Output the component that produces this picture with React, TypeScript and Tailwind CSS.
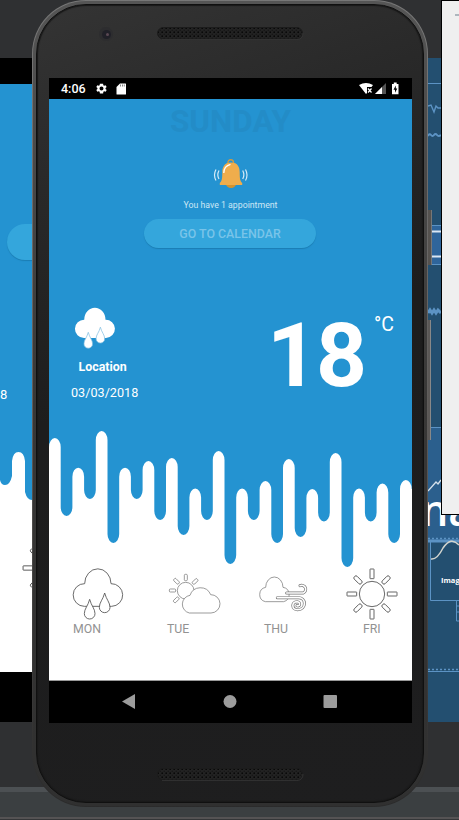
import React from "react";

const PEAKS = [438, 467.7, 431, 467.7, 461, 458, 488.5, 451, 488.5, 481, 459, 489, 453, 488.5, 483.5, 480];
const DRIPS = [516, 499, 543, 499, 520, 535, 520, 564, 520, 543, 537, 521.5, 567, 521.5, 543];
const STEP = 11.7;
const CAP = 9;

function wavePath(top: number) {
  let d = `M0 145 V${PEAKS[0] - top + CAP}`;
  PEAKS.forEach((p, i) => {
    const x = (2 * i + 1) * STEP;
    d += ` A${STEP / 2} ${CAP} 0 0 1 ${x} ${p - top + CAP}`;
    if (i < DRIPS.length) {
      const b = DRIPS[i] - top - CAP;
      d += ` V${b} A${STEP / 2} ${CAP} 0 0 0 ${x + STEP} ${b} V${PEAKS[i + 1] - top + CAP}`;
    }
  });
  return d + " H364 V145 Z";
}

const drop = (x: number, y: number) =>
  `M${x} ${y} C${x - 5} ${y + 20} ${x - 16} ${y + 28} ${x - 16} ${y + 43} A16 16 0 0 0 ${x + 16} ${y + 43} C${x + 16} ${y + 28} ${x + 5} ${y + 20} ${x} ${y}Z`;

function RainCloud({ className, fill, stroke, dropStroke }: { className: string; fill: string; stroke: string; dropStroke: string }) {
  return (
    <svg className={className} viewBox="51 24 156 156" strokeWidth="2.6">
      <path d="M88 139 A34 34 0 0 1 89 71 A39.5 44.5 0 0 1 168 71 A34 34 0 0 1 170 139Z" fill={fill} stroke={stroke} />
      <path d={drop(104, 118)} fill={fill} stroke={dropStroke} />
      <path d={drop(149, 99)} fill={fill} stroke={dropStroke} />
    </svg>
  );
}

function PartlyCloudy() {
  return (
    <svg className="h-[41px] w-[53px] shrink-0" viewBox="339 40 159 123" fill="white" stroke="#777" strokeWidth="2.2">
      <circle cx="392" cy="93" r="25" />
      {[-135, -90, -45, 0, 45].map((a) => (
        <rect key={a} x="388" y="44" width="9" height="19" rx="3" transform={`rotate(${a} 392 93)`} />
      ))}
      <path d="M403 160 A27 27 0 0 1 405 107 A33 33 0 0 1 467 105 A27.5 27.5 0 0 1 468 160Z" />
    </svg>
  );
}

function WindyCloud() {
  const gust = "M159 99 H209 A11.5 11.5 0 1 0 199 77";
  const curl = "M131 113 H192 C219 111 219 149 192 149 C173 149 173 125 190 125 C202 126 199 141 190 137";
  return (
    <svg className="-ml-px h-[36px] w-[53px] shrink-0" viewBox="70 48 159 108" fill="none" stroke="#777" strokeWidth="2.2">
      <path d="M95 125 A22 22 0 0 1 96 82 A26 31 0 0 1 148 82 A22 22 0 0 1 150 125Z" fill="white" />
      {[gust, curl].map((d) => (
        <g key={d} strokeLinecap="round">
          <path d={d} strokeWidth="9" />
          <path d={d} stroke="white" strokeWidth="4.8" />
        </g>
      ))}
    </svg>
  );
}

function Sun({ className }: { className: string }) {
  return (
    <svg className={className} viewBox="333 23 156 156" fill="white" stroke="#505050" strokeWidth="2.6">
      <circle cx="411" cy="101" r="38" />
      {[0, 45, 90, 135, 180, 225, 270, 315].map((a) => (
        <rect key={a} x="405" y={a % 90 ? 27 : 26} width="12" height="29" rx={a % 90 ? 5 : 1} transform={`rotate(${a} 411 101)`} />
      ))}
    </svg>
  );
}

function Bell() {
  return (
    <svg className="mt-[4px] h-[31px] w-[36px]" viewBox="0 0 36 31" fill="none">
      <circle cx="17.700" cy="4.500" r="2.800" stroke="#cf9a43" strokeWidth="1.400" />
      <path d="M13 26 h10 a5 4 0 0 1 -10 0Z" fill="#d4922f" />
      <path d="M18 4.5 C11 4.5 9.3 9.5 9.3 14.5 C9.3 21 8.8 23 6.8 25 V27 H29.2 V25 C27.2 23 26.7 21 26.7 14.5 C26.7 9.5 25 4.5 18 4.5Z" fill="#efad4c" />
      <path d="M10.8 15 C10.8 10 13 7.5 17.5 6.3" stroke="white" strokeWidth="1.3" />
      <path d="M3 11.5 Q0 17 3 22.5 M6 12.5 Q3.6 17 6 21 M32.5 11.5 Q35.500 17 32.500 22.5 M29.700 12.5 Q32 17 29.700 21" stroke="#d5ebf7" strokeWidth="1.2" />
    </svg>
  );
}

function Speaker({ id }: { id: string }) {
  return (
    <svg className="h-[13px] w-[147px]" viewBox="0 0 147 13">
      <defs>
        <pattern id={id} width="4" height="4" patternUnits="userSpaceOnUse">
          <rect width="4" height="4" fill="#222" />
          <circle cx="1.2" cy="1.2" r=".9" fill="#080808" />
          <circle cx="3.2" cy="3.2" r=".7" fill="#121212" />
        </pattern>
      </defs>
      <rect x=".5" y=".5" width="145" height="11.500" rx="5.800" fill={`url(#${id})`} stroke="#1c1c1c" />
      <path d="M5 12.6 H140 Q146 12 146 6" stroke="#393939" strokeWidth=".8" fill="none" />
    </svg>
  );
}

function StatusBar() {
  return (
    <div className="flex h-[21px] shrink-0 items-center bg-black pl-[12px] pr-[12px] text-white">
      <span className="w-[34px] text-[12.5px] font-medium leading-[21px]">4:06</span>
      <svg className="h-[13px] w-[13px]" viewBox="0 0 24 24" fill="white">
        <path fillRule="evenodd" d="M19.4 13a7.500 7.500 0 0 0 0-2l2.100-1.600-2-3.500-2.500 1a8 8 0 0 0-1.700-1L15 3H9l-.4 2.900a8 8 0 0 0-1.700 1l-2.500-1-2 3.500L4.500 11a7.500 7.500 0 0 0 0 2l-2.100 1.600 2 3.500 2.500-1a8 8 0 0 0 1.700 1L9 21h6l.4-2.900a8 8 0 0 0 1.700-1l2.500 1 2-3.500ZM12 8.300a3.700 3.700 0 1 1 0 7.400 3.700 3.700 0 0 1 0-7.400Z" />
      </svg>
      <svg className="ml-[8px] h-[12px] w-[11px]" viewBox="0 0 11 12">
        <path d="M4 .5H9.500Q10 .5 10 1V11Q10 11.500 9.500 11.500H1Q.5 11.500 .5 11V4Z" fill="white" />
        <path d="M4.500 1.500V3.500M6.500 1.500V3.500M8.300 1.500V3.500" stroke="#555" strokeWidth=".7" />
      </svg>
      <svg className="ml-auto h-[13px] w-[41px]" viewBox="0 0 41 13">
        <path d="M0 3 Q7-1 14 3 L12.500 5 H8V11L7 12Z" fill="white" />
        <path d="M9 6.500L12.500 10.500M12.500 6.500L9 10.500" stroke="white" strokeWidth="1.200" />
        <path d="M16 12L27 1V12Z" fill="#555" />
        <path d="M16 12L23 5V12Z" fill="white" />
        <path d="M33 2H34.800V.6H37.700V2H39.500V12.300H33Z" fill="white" />
        <path d="M36.800 3.500L34.500 7.800H36V10.800L38.300 6.500H36.800Z" fill="black" />
      </svg>
    </div>
  );
}

function Blueprint() {
  return (
    <svg className="h-[664px] w-[31px]" viewBox="428 58 31 664" fill="none" stroke="#5c93c4">
      <path d="M428 58H459V722H428Z" fill="#234f70" stroke="none" />
      <path d="M428 428H459V540H428Z" fill="#2b5f8d" stroke="none" />
      <path d="M428 83.500H441M428 427.500H441" />
      <path d="M428 106L431 105L434 112L436 106L438 108H441" strokeWidth="1.400" />
      <path d="M428 136Q429.500 133 431 135T434 135T437 135T441 135" strokeWidth="2" />
      <path d="M431 225.500H442V264.500H431" fill="#2f659b" />
      <path d="M431 231.500H441M431 256.500H441" stroke="#dce7f4" strokeWidth="2" />
      <path d="M428 313L430 310L432 313L434 310L436 313L438 310L441 313" strokeWidth="3" />
      <path d="M428 491L436 482L438 484L441 480" stroke="#d5e1ec" strokeWidth="1.300" />
      <path d="M428 541H459" strokeWidth="3" />
      <path d="M428 538.500H459M428 669.500H459" strokeWidth="1.500" strokeDasharray="2 2" />
      <path d="M430.500 541V600.500H459M428 671.500H459" />
      <path d="M431 559Q437 560 443 548Q451 536 459 545" stroke="#d2d4ce" strokeWidth="1.500" />
      <path d="M456.500 601V621H459M457 606H459M457 612H459" />
      <text x="421" y="526" fill="white" stroke="none" fontFamily="Open Sans, sans-serif" fontSize="43" fontWeight="600">na</text>
      <text x="441" y="583" fill="white" stroke="none" fontFamily="Open Sans, sans-serif" fontSize="7.500" fontWeight="700">Image</text>
    </svg>
  );
}

function LeftPreview() {
  return (
    <div className="flex h-[664px] w-[32px] flex-col overflow-hidden bg-black pb-[50px] pt-[26px]">
      <div className="flex h-[368px] shrink-0 flex-col bg-[#2493d1] pt-[140px] text-white">
        <div className="ml-[7px] h-[36px] w-[80px] shrink-0 rounded-full bg-[#34a6dc] shadow-[0_1px_1px_#1b7eb4]" />
        <div className="mt-[127px] text-[13px] leading-[16px]">8</div>
      </div>
      <svg className="h-[60px] w-[32px] shrink-0" viewBox="0 0 32 60">
        <path d="M0 0H32V60H0Z" fill="white" />
        <path d="M0 0H32V48Q27 48 25 40V9Q24 0 18.500 0Q13 0 12 9V24Q10 33 5 33Q1 33 0 28Z" fill="#2493d1" />
      </svg>
      <div className="h-[220px] bg-white pl-[22px] pt-[28px]">
        <Sun className="h-[56px] w-[56px]" />
      </div>
    </div>
  );
}

function Desktop() {
  return (
    <div className="flex h-[820px] flex-col bg-[#2f3032]">
      <div className="mt-[58px] flex h-[664px] justify-between">
        <LeftPreview />
        <Blueprint />
      </div>
      <div className="mt-[65px] h-[5px] bg-[#4c5053]" />
      <div className="h-[25px] bg-[#3b3f41]" />
      <div className="h-[2px] bg-[#555354]" />
      <div className="h-[1px] bg-[#353638]" />
    </div>
  );
}

function WeatherApp() {
  return (
    <div className="flex h-[581px] flex-col bg-[#2493d1] text-white">
      <div className="flex h-[325px] shrink-0 flex-col">
        <div className="flex flex-col items-center">
          <h1 className="mt-[7px] text-[31.5px] font-bold leading-[32px] text-[#238cc7]">SUNDAY</h1>
          <div className="mt-[16px] flex h-[45px] justify-center"><Bell /></div>
          <p className="text-[8.75px] leading-[12px] text-[#cde7f5]">You have 1 appointment</p>
          <button className="mr-px mt-[7.5px] h-[29px] w-[172px] rounded-full bg-[#34a6dc] text-[12.4px] font-medium leading-[30px] text-[#79c4e9] shadow-[0_1px_1px_#1b7eb4]">
            GO TO CALENDAR
          </button>
        </div>
        <div className="mt-[59.5px] flex justify-between">
          <div className="w-[110px] pl-[25px]">
            <RainCloud className="h-[42px] w-[42px]" fill="white" stroke="none" dropStroke="#7dbce0" />
            <div className="mt-[10px] pl-[4.5px] text-[12.4px] font-bold leading-[16px]">Location</div>
            <div className="-ml-[3px] mt-[10px] text-[12.65px] leading-[16px]">03/03/2018</div>
          </div>
          <div className="flex pr-[18px]">
            <span className="mt-[3px] text-[89px] font-bold leading-[92px] tracking-[-2px]">18</span>
            <span className="ml-[9px] mt-[7px] text-[19.5px] leading-[22px]">°C</span>
          </div>
        </div>
      </div>
      <svg className="h-[144px] w-[363px] shrink-0" viewBox="0 0 363 144">
        <path d={wavePath(424)} fill="white" />
      </svg>
      <div className="flex h-[112px] bg-white text-[12.3px] leading-[14px] text-[#929292]">
        <div className="w-[119px] shrink-0 pl-[23px]">
          <div className="h-[54px]"><RainCloud className="h-[52px] w-[52px]" fill="white" stroke="#555" dropStroke="#555" /></div>
          <div className="pl-[1px]">MON</div>
        </div>
        <div className="w-[90px] shrink-0">
          <div className="h-[54px] pt-[5px]"><PartlyCloudy /></div>
          <div className="-ml-[1px]">TUE</div>
        </div>
        <div className="w-[88px] shrink-0">
          <div className="h-[54px] pt-[8px]"><WindyCloud /></div>
          <div className="pl-[6px]">THU</div>
        </div>
        <div className="w-[66px] shrink-0">
          <div className="h-[54px]"><Sun className="h-[52px] w-[52px]" /></div>
          <div className="pl-[17px]">FRI</div>
        </div>
      </div>
    </div>
  );
}

function Phone() {
  return (
    <div className="h-[807px] w-[396px] rounded-[54px] bg-linear-to-b from-[#777] via-[#605d5b] to-[#2b2b2b] p-px">
      <div className="h-full rounded-[53px] bg-linear-to-b from-[#555] via-[#383736] to-[#303030] p-[3px]">
        <div className="flex h-full flex-col rounded-[50px] border border-[#101010] bg-linear-[160deg,#343434,#292929_20%,#1d1d1d_45%,#1e1e1f] px-[12px] shadow-[inset_0_0_1px_1px_#191919]">
          <div className="flex h-[73px] shrink-0 pt-[22px]">
            <div className="ml-[50px] flex h-[14px] w-[14px] items-center justify-center rounded-full bg-[#2d2d2f]">
              <div className="flex h-[9px] w-[9px] items-center justify-center rounded-full bg-[#202028]">
                <div className="ml-[2px] h-[3px] w-[3px] rounded-full bg-[#5a4853]" />
              </div>
            </div>
            <div className="ml-[44px]"><Speaker id="earpiece" /></div>
          </div>
          <div className="flex h-[645px] w-[363px] shrink-0 flex-col">
            <StatusBar />
            <WeatherApp />
            <div className="h-px bg-[#999]" />
            <div className="flex h-[42px] bg-black pl-[73px] pt-[13px]">
              <svg className="h-[16px] w-[216px]" viewBox="0 0 216 16" fill="#9c9c9c">
                <path d="M0 7.500L13 0V15Z" />
                <circle cx="108" cy="7.500" r="6.500" />
                <rect x="201.500" y="1" width="13.500" height="13" rx="1" />
              </svg>
            </div>
          </div>
          <div className="ml-[108px] mt-[45px]"><Speaker id="bottom-speaker" /></div>
        </div>
      </div>
    </div>
  );
}

export default function App() {
  return (
    <div className="relative h-[820px] w-[459px] overflow-hidden font-[Roboto,sans-serif]">
      <Desktop />
      <div className="absolute left-[428px] top-[210px] h-[55px] w-[4px] border-r border-[#777] bg-[#55524f]" />
      <div className="absolute left-[428px] top-[320px] h-[120px] w-[3px] border-r border-[#888] bg-[#5b5856]" />
      <div className="absolute left-[32px] top-0"><Phone /></div>
      <div className="absolute left-[441px] top-0 h-[515px] w-[30px] border border-black bg-[#efefef] pl-[13px] pt-[13px]">
        <div className="h-[2px] bg-[#adb6bd]" />
      </div>
    </div>
  );
}
